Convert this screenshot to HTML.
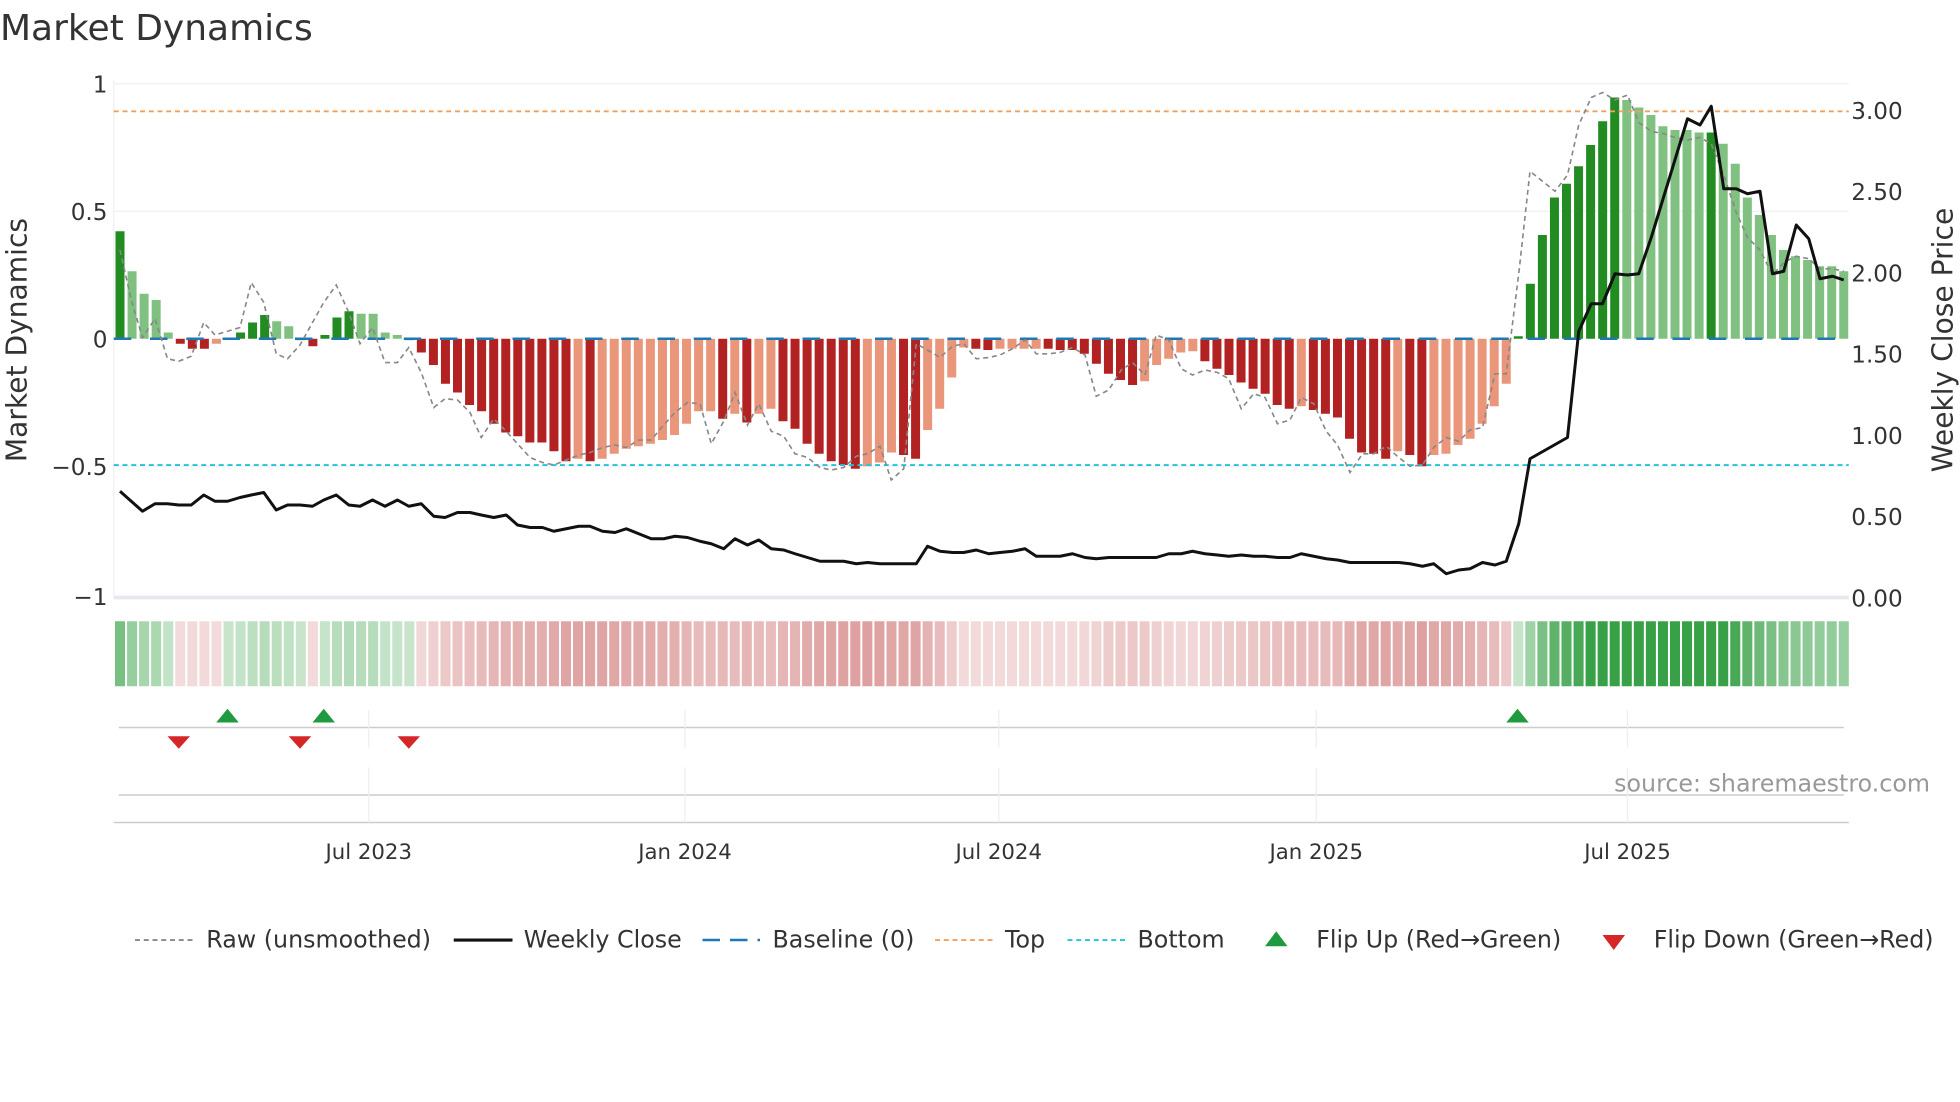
<!DOCTYPE html>
<html><head><meta charset="utf-8"><style>
html,body{margin:0;padding:0;background:#fff;width:1960px;height:1102px;overflow:hidden}
svg{display:block}
text{font-family:"DejaVu Sans","Liberation Sans",sans-serif;fill:#333}
</style></head><body>
<svg id="s" width="1960" height="1102" viewBox="0 0 1568 881.6" preserveAspectRatio="none" xmlns="http://www.w3.org/2000/svg">
<text x="0" y="32" font-size="28.8">Market Dynamics</text>
<g id="grid"></g>
<g id="bars"></g>
<g id="lines"></g>
<g id="strip"></g>
<g id="flip"></g>
<g font-size="18.5">
<text x="86" y="74" text-anchor="end">1</text>
<text x="86" y="176" text-anchor="end">0.5</text>
<text x="86" y="278" text-anchor="end">0</text>
<text x="86" y="380" text-anchor="end">−0.5</text>
<text x="86" y="484" text-anchor="end">−1</text>
<text x="1481" y="95">3.00</text>
<text x="1481" y="160">2.50</text>
<text x="1481" y="225">2.00</text>
<text x="1481" y="290">1.50</text>
<text x="1481" y="355">1.00</text>
<text x="1481" y="420">0.50</text>
<text x="1481" y="485">0.00</text>
</g>
<text font-size="22.5" transform="translate(21,272) rotate(-90)" text-anchor="middle">Market Dynamics</text>
<text font-size="22.5" transform="translate(1562,272) rotate(-90)" text-anchor="middle">Weekly Close Price</text>
<g font-size="17" text-anchor="middle">
<text x="295" y="687">Jul 2023</text>
<text x="548" y="687">Jan 2024</text>
<text x="799" y="687">Jul 2024</text>
<text x="1053" y="687">Jan 2025</text>
<text x="1302" y="687">Jul 2025</text>
</g>
<text x="1544" y="633" font-size="19" text-anchor="end" style="fill:#999">source: sharemaestro.com</text>
<g font-size="19">
<line x1="108" y1="752" x2="154" y2="752" stroke="#888" stroke-width="1.5" stroke-dasharray="4,3"/>
<text x="165" y="758">Raw (unsmoothed)</text>
<line x1="363" y1="752" x2="410" y2="752" stroke="#111" stroke-width="2.5"/>
<text x="419" y="758">Weekly Close</text>
<line x1="562" y1="752" x2="608" y2="752" stroke="#1f77b4" stroke-width="2" stroke-dasharray="14,8"/>
<text x="618" y="758">Baseline (0)</text>
<line x1="748" y1="752" x2="794" y2="752" stroke="#f0a060" stroke-width="1.5" stroke-dasharray="4,3"/>
<text x="804" y="758">Top</text>
<line x1="854" y1="752" x2="900" y2="752" stroke="#22c4dc" stroke-width="1.5" stroke-dasharray="4,3"/>
<text x="910" y="758">Bottom</text>
<polygon points="1012,757 1021,745 1030,757" fill="#1f9a3e"/>
<text x="1053" y="758">Flip Up (Red→Green)</text>
<polygon points="1282,748 1300,748 1291,760" fill="#d62728"/>
<text x="1323" y="758">Flip Down (Green→Red)</text>
</g>
</svg>
<script>
var NS="http://www.w3.org/2000/svg";
function el(p,t,a){var e=document.createElementNS(NS,t);for(var k in a)e.setAttribute(k,a[k]);document.getElementById(p).appendChild(e);return e;}
[67,169,373].forEach(function(y){el("grid","line",{x1:91,x2:1479,y1:y,y2:y,stroke:"#eef0f3","stroke-width":1});});
el("grid","line",{x1:91,x2:91,y1:64,y2:478,stroke:"#eef0f3","stroke-width":1});
el("grid","line",{x1:91,x2:1479,y1:478,y2:478,stroke:"#e6e8ef","stroke-width":3});
var B=[[185,"D"],[217,"L"],[235,"L"],[240,"L"],[266,"L"],[275,"R"],[279,"R"],[279,"R"],[275,"S"],[270,"L"],[266,"D"],[258,"D"],[252,"D"],[257,"L"],[261,"L"],[271,"L"],[277,"R"],[268,"D"],[254,"D"],[249,"D"],[251,"L"],[251,"L"],[266,"L"],[268,"L"],[271,"L"],[282,"R"],[292,"R"],[307,"R"],[314,"R"],[324,"R"],[329,"R"],[339,"R"],[346,"R"],[349,"R"],[354,"R"],[354,"R"],[361,"R"],
[369,"R"],[367,"S"],[369,"R"],[367,"S"],[363,"S"],[359,"S"],[357,"S"],[355,"S"],[352,"S"],[348,"S"],[339,"S"],[329,"S"],[329,"S"],[335,"R"],[331,"S"],[338,"R"],[331,"S"],[327,"S"],[337,"R"],[343,"R"],[355,"R"],[363,"R"],[369,"R"],[372,"R"],[375,"R"],[373,"S"],[370,"S"],[362,"S"],[364,"R"],[367,"R"],[344,"S"],[327,"S"],[302,"S"],[278,"S"],[279,"R"],[280,"R"],[279,"S"],[279,"S"],[279,"S"],[279,"S"],[279,"R"],[280,"R"],[280,"R"],[283,"R"],[291,"R"],
[299,"R"],[304,"R"],[308,"R"],[305,"S"],[292,"S"],[287,"S"],[282,"S"],[281,"S"],[289,"R"],[295,"R"],[300,"R"],[306,"R"],[311,"R"],[315,"R"],[324,"R"],[327,"R"],[325,"S"],[328,"R"],[331,"R"],[334,"R"],[351,"R"],[362,"R"],[363,"R"],[367,"R"],[361,"S"],[364,"R"],[373,"R"],[364,"S"],[363,"S"],[356,"S"],[351,"S"],[339,"S"],[325,"S"],[307,"S"],
[269,"D"],[227,"D"],[188,"D"],[158,"D"],[147,"D"],[133,"D"],[116,"D"],[97,"D"],[78,"D"],[80,"L"],[86,"L"],[92,"L"],[101,"L"],[104,"L"],[104,"L"],[106,"L"],[106,"D"],[115,"L"],[131,"L"],[158,"L"],[172,"L"],[188,"L"],[200,"L"],[205,"L"],[208,"L"],[213,"L"],[213,"L"],[217,"L"]];
var C={D:"#228b22",L:"#80c080",R:"#b22222",S:"#e9967a"};
var N=B.length,sp=(1475-96)/(N-1),bw=7.2;
B.forEach(function(b,i){var x=96+i*sp,y=b[0],t=Math.min(y,271),h=Math.abs(y-271);if(h<1.2)h=1.2;
el("bars","rect",{x:x-bw/2,y:t,width:bw,height:h,fill:C[b[1]]});
var v=(271-y)/204,a,c;
if(b[1]=="D"||b[1]=="L"){a=0.25+0.85*Math.abs(v);c="34,150,50";}else{a=0.15+0.55*Math.abs(v);c="178,34,34";}
if(a>0.9)a=0.9;
el("strip","rect",{x:x-sp/2+0.8,y:497,width:sp-1.6,height:52,fill:"rgba("+c+","+a.toFixed(2)+")"});
});
el("lines","line",{x1:91,x2:1479,y1:89,y2:89,stroke:"#f0a060","stroke-width":1.5,"stroke-dasharray":"4,3"});
el("lines","line",{x1:91,x2:1479,y1:372,y2:372,stroke:"#22c4dc","stroke-width":1.5,"stroke-dasharray":"4,3"});
el("lines","line",{x1:91,x2:1479,y1:271,y2:271,stroke:"#1f77b4","stroke-width":2,"stroke-dasharray":"14,15"});
var raw="96,200 105,240 114,270 124,255 134,287 143,289 153,285 163,258 172,268 182,265 192,262 201,226 211,242 221,283 230,287 240,276 250,258 259,242 269,228 279,250 288,275 298,262 308,290 318,290 327,278 337,298 347,326 356,319 366,320 376,330 385,350 395,335 405,345 414,355 424,366 434,370 443,372 453,368 463,364 472,362 482,358 492,356 501,358 511,352 521,352 531,340 540,330 550,322 560,323 569,355 579,337 588,314 598,340 607,323 617,345 627,349 636,363 646,366 656,374 665,376 675,374 685,365 694,363 704,357 713,384 723,375 733,275 742,280 752,286 762,277 771,275 781,287 791,286 800,284 810,279 820,272 829,283 839,283 848,282 858,278 868,284 877,317 887,312 897,296 906,290 916,300 925,268 935,272 945,295 954,300 964,296 974,298 983,303 993,327 1003,315 1012,318 1022,339 1032,336 1041,318 1051,323 1061,345 1070,356 1080,378 1090,363 1099,363 1109,357 1119,366 1128,373 1138,372 1147,358 1157,350 1167,353 1176,344 1186,342 1196,299 1205,299 1215,219 1224,137 1234,145 1244,153 1254,140 1263,100 1273,78 1282,74 1292,80 1302,76 1311,98 1321,105 1331,107 1340,110 1350,112 1360,110 1369,115 1379,140 1389,170 1398,190 1408,200 1418,220 1427,210 1437,205 1447,207 1456,215 1466,215 1475,217";
el("lines","polyline",{points:raw,fill:"none",stroke:"#888","stroke-width":1.3,"stroke-dasharray":"4,3"});
var close="96,393 105,401 114,409 124,403 134,403 143,404 153,404 163,396 172,401 182,401 192,398 201,396 211,394 221,408 230,404 240,404 250,405 259,400 269,396 279,404 288,405 298,400 308,405 318,400 327,405 337,403 347,413 356,414 366,410 376,410 385,412 395,414 405,412 414,420 424,422 434,422 443,425 453,423 463,421 472,421 482,425 492,426 501,423 511,427 521,431 531,431 540,429 550,430 560,433 569,435 579,439 588,431 598,436 607,432 617,439 627,440 636,443 646,446 656,449 665,449 675,449 685,451 694,450 704,451 713,451 723,451 733,451 742,437 752,441 762,442 771,442 781,440 791,443 800,442 810,441 820,439 829,445 839,445 848,445 858,443 868,446 877,447 887,446 897,446 906,446 916,446 925,446 935,443 945,443 954,441 964,443 974,444 983,445 993,444 1003,445 1012,445 1022,446 1032,446 1041,443 1051,445 1061,447 1070,448 1080,450 1090,450 1099,450 1109,450 1119,450 1128,451 1138,453 1147,451 1157,459 1167,456 1176,455 1186,450 1196,452 1205,449 1215,419 1224,367 1254,350 1263,265 1273,243 1282,243 1292,219 1302,220 1311,219 1321,190 1350,95 1360,100 1369,85 1379,151 1389,151 1398,155 1408,153 1418,219 1427,217 1437,180 1447,191 1456,223 1466,221 1475,224";
el("lines","polyline",{points:close,fill:"none",stroke:"#111","stroke-width":2.4,"stroke-linejoin":"round"});
el("flip","line",{x1:95,x2:1475,y1:582,y2:582,stroke:"#ccc","stroke-width":1.2});
el("flip","line",{x1:95,x2:1475,y1:636,y2:636,stroke:"#ccc","stroke-width":1.2});
el("flip","line",{x1:91,x2:1479,y1:658,y2:658,stroke:"#ccc","stroke-width":1.2});
[295,548,799,1053,1302].forEach(function(x){el("flip","line",{x1:x,x2:x,y1:568,y2:598,stroke:"#eee","stroke-width":1});el("flip","line",{x1:x,x2:x,y1:614,y2:658,stroke:"#eee","stroke-width":1});});
[182,259,1214].forEach(function(x){el("flip","polygon",{points:(x-9)+",578 "+x+",567 "+(x+9)+",578",fill:"#1f9a3e"});});
[143,240,327].forEach(function(x){el("flip","polygon",{points:(x-9)+",589 "+(x+9)+",589 "+x+",599",fill:"#d62728"});});
</script>
</body></html>
